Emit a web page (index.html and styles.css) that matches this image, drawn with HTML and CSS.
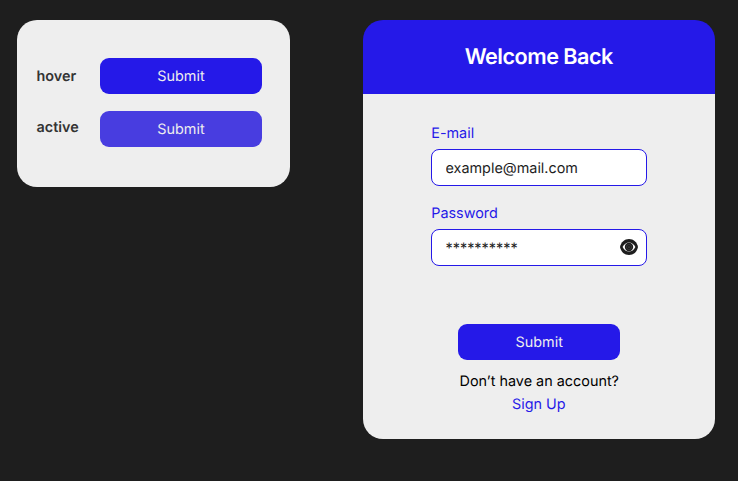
FILE: index.html
```html
<!DOCTYPE html>
<html lang="en">
<head>
<meta charset="utf-8">
<title>Welcome Back</title>
<link rel="stylesheet" href="styles.css">
</head>
<body>
<main class="board">
  <section class="states">
    <div class="state"><span class="state-name">hover</span><button class="button">Submit</button></div>
    <div class="state state-active"><span class="state-name">active</span><button class="button button-active">Submit</button></div>
  </section>
  <section class="card">
    <header class="card-header"><h1 class="title">Welcome Back</h1></header>
    <form class="form">
      <label class="label" for="email">E-mail</label>
      <div class="field"><input class="input" id="email" type="text" value="example@mail.com"></div>
      <label class="label" for="password">Password</label>
      <div class="field"><input class="input input-password" id="password" type="text" value="**********">
        <svg class="eye" viewBox="0 0 18 16"><path fill="#1e1e1e" d="M9 0C4.500 0 1 3 0 8c1 5 4.500 8 9 8s8-3 9-8c-1-5-4.500-8-9-8Z"/><path fill="#fff" d="M2.600 8Q5 3.400 9 3.400T15.400 8Q13 12.600 9 12.600T2.600 8Z"/><circle cx="9" cy="8" r="4.200" fill="#1e1e1e"/><circle cx="9" cy="8" r="2.600" fill="none" stroke="#555" stroke-width=".4"/><circle cx="9" cy="8" r=".5" fill="#777"/></svg>
      </div>
      <button class="button" type="button">Submit</button>
      <p class="question">Don’t have an account?</p>
      <a class="link" href="#">Sign Up</a>
    </form>
  </section>
</main>
</body>
</html>
```
FILE: styles.css
```css
* { box-sizing: border-box; }
body { margin: 0; background: #1e1e1e; font: 14.400px/18px Inter, sans-serif; color: #1e1e1e; text-rendering: geometricPrecision; }
.board { display: flex; justify-content: space-between; align-items: flex-start; height: 481px; padding: 19.500px 23.500px 0 16.500px; }
.states { width: 273.500px; height: 167px; padding: 38.500px 28px 0 20px; border-radius: 20px; background: #eee; display: flex; flex-direction: column; gap: 17px; }
.state { display: flex; justify-content: space-between; align-items: center; }
.state-name { padding-top: 2px; font-weight: 600; color: #333; }
.state-active .state-name { padding: 0 0 2px; }
.button { width: 162px; height: 36px; padding: 1px 0 0; border: 0; border-radius: 9px; background: #2519e8; color: #eee; font: inherit; text-rendering: inherit; }
.button-active { background: #483de0; }
.card { width: 351.500px; height: 419.500px; display: flex; flex-direction: column; }
.card-header { height: 74.500px; display: flex; align-items: center; justify-content: center; border-radius: 20px 20px 0 0; background: #2519e8; }
.title { margin: 0; padding-top: 1px; font-size: 21.600px; line-height: 26px; letter-spacing: -.5px; font-weight: 600; color: #fff; }
.form { flex: 1; display: flex; flex-direction: column; align-items: center; padding-top: 31px; border-radius: 0 0 20px 20px; background: #eee; }
.label { width: 215px; color: #2519e8; }
.field { display: flex; align-items: center; width: 216.500px; height: 36.500px; margin: 6px 0 19.500px; padding: 0 8px 0 14px; border: 1px solid #2519e8; border-radius: 8px; background: #fff; }
.input { flex: 1; min-width: 0; padding: 3px 0 0; border: 0; outline: 0; background: none; font: inherit; color: inherit; text-rendering: inherit; }
.input-password { padding-top: 2.500px; }
.eye { width: 18px; height: 16px; }
.form .button { margin-top: 38.500px; padding: 2px 0 0 1px; }
.question { margin: 13.200px 0 5.300px; padding-left: 1px; color: #000; }
.link { color: #2519e8; text-decoration: none; }
```
